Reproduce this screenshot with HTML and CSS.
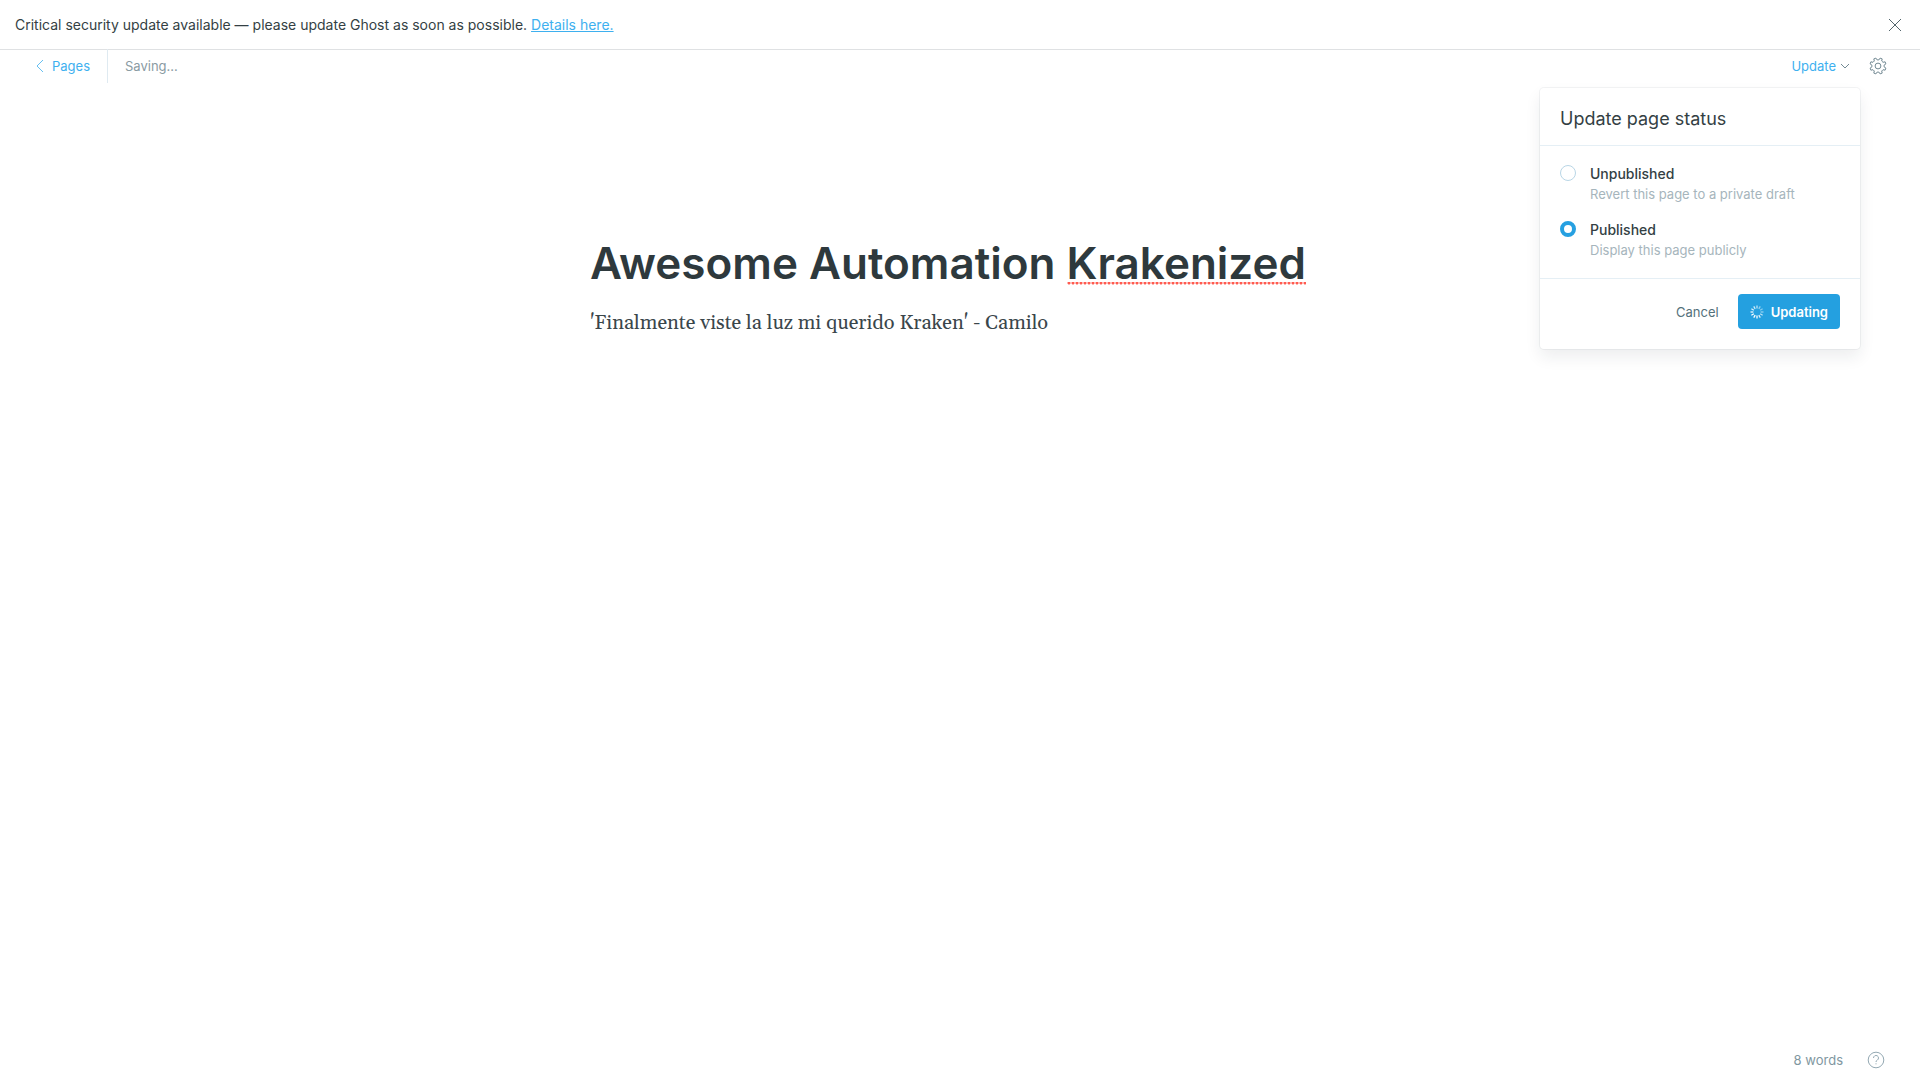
FILE: index.html
```html
<!DOCTYPE html>
<html lang="en">
<head>
<meta charset="utf-8">
<meta name="viewport" content="width=device-width, initial-scale=1">
<title>Editor - Ghost</title>
<link rel="stylesheet" href="styles.css">
</head>
<body>
<div class="app">
  <aside class="alert">
    <p class="alert-text">Critical security update available — please update Ghost as soon as possible. <a href="#details">Details here.</a></p>
    <button class="alert-close" type="button" aria-label="Close">
      <svg width="14" height="14" viewBox="0 0 14 14"><path d="M1 1l12 12M13 1L1 13"/></svg>
    </button>
  </aside>

  <header class="toolbar">
    <a class="back-link" href="#pages">
      <svg width="8" height="14" viewBox="0 0 8 14"><path d="M7 1L1 7l6 6" stroke-width=".8"/></svg>
      Pages
    </a>
    <span class="save-status">Saving...</span>
    <div class="actions">
      <div class="publish-menu">
        <button class="publish-trigger" type="button" aria-expanded="true">
          Update
          <svg width="10" height="6" viewBox="0 0 10 6"><path d="M1 1l4 4 4-4"/></svg>
        </button>
        <form class="dropdown">
          <h2 class="dropdown-title">Update page status</h2>
          <div class="options">
            <label class="option">
              <input type="radio" name="status" value="draft">
              <span class="option-text"><span class="option-name">Unpublished</span><span class="option-note">Revert this page to a private draft</span></span>
            </label>
            <label class="option">
              <input type="radio" name="status" value="published" checked>
              <span class="option-text"><span class="option-name">Published</span><span class="option-note">Display this page publicly</span></span>
            </label>
          </div>
          <div class="dropdown-footer">
            <button class="cancel" type="button">Cancel</button>
            <button class="submit" type="submit">
              <svg width="14" height="14" viewBox="-7 -7 14 14">
                <g stroke="#fff" stroke-width="1.3">
                  <path d="M0 -6.5V-3.6" opacity=".7"/>
                  <path d="M0 -6.5V-3.6" transform="rotate(30)" opacity=".5"/>
                  <path d="M0 -6.5V-3.6" transform="rotate(60)" opacity=".45"/>
                  <path d="M0 -6.5V-3.6" transform="rotate(90)" opacity=".5"/>
                  <path d="M0 -6.5V-3.6" transform="rotate(120)" opacity=".7"/>
                  <path d="M0 -6.5V-3.6" transform="rotate(150)" opacity=".85"/>
                  <path d="M0 -6.5V-3.6" transform="rotate(180)"/>
                  <path d="M0 -6.5V-3.6" transform="rotate(210)"/>
                  <path d="M0 -6.5V-3.6" transform="rotate(240)"/>
                  <path d="M0 -6.5V-3.6" transform="rotate(270)" opacity=".9"/>
                  <path d="M0 -6.5V-3.6" transform="rotate(300)" opacity=".85"/>
                  <path d="M0 -6.5V-3.6" transform="rotate(330)" opacity=".8"/>
                </g>
              </svg>
              Updating
            </button>
          </div>
        </form>
      </div>
      <button class="settings" type="button" aria-label="Settings">
        <svg width="18" height="18" viewBox="-9 -9 18 18"><circle r="2.9"/><path stroke-linejoin="round" d="M6.100 .9L7.900 2.100 7.100 4.200 5 3.700 3.700 5 4.200 7.100 2.100 7.900 .9 6.100H-.9L-2.100 7.900-4.200 7.100-3.700 5-5 3.700-7.100 4.200-7.900 2.100-6.100 .9V-.9L-7.900-2.100-7.100-4.200-5-3.700-3.700-5-4.200-7.100-2.100-7.900-.9-6.100H.9L2.100-7.900 4.200-7.100 3.700-5 5-3.700 7.100-4.200 7.900-2.100 6.100-.9z"/></svg>
      </button>
    </div>
  </header>

  <main class="editor">
    <h1 class="post-title">Awesome Automation <span class="misspelled">Krakenized</span></h1>
    <p class="post-body">'Finalmente viste la luz mi querido Kraken' - Camilo</p>
  </main>

  <footer class="status-bar">
    <span>8 words</span>
    <a class="help" href="#help" aria-label="Help">
      <svg width="18" height="18" viewBox="0 0 18 18"><circle cx="9" cy="9" r="7.800"/><path d="M6.500 7a2.500 2.500 0 1 1 3.800 2.100C9.400 9.600 9 10 9 11M9 12.300v1"/></svg>
    </a>
  </footer>
</div>
</body>
</html>
```
FILE: styles.css
```css
* { box-sizing: border-box; }

body {
  margin: 0;
  background: #fff;
  color: #343f44;
  font: 13px/20px Inter, "Liberation Sans", sans-serif;
}

h1, h2, p { margin: 0; }

button {
  border: 0;
  padding: 0;
  background: none;
  font: inherit;
  cursor: pointer;
}

a { color: #3eb0ef; }

svg {
  display: block;
  fill: none;
  stroke: currentColor;
}

.app {
  display: flex;
  flex-direction: column;
  min-height: 100vh;
}

.alert {
  display: flex;
  align-items: center;
  justify-content: space-between;
  height: 50px;
  padding: 0 18px 0 15px;
  border-bottom: 1px solid #dfe1e3;
}

.alert-text { font-size: 14px; }

.alert-close { color: #54666d; }

.toolbar {
  display: flex;
  align-items: center;
  height: 34px;
  padding: 0 33px 2px 0;
}

.back-link {
  display: flex;
  align-items: center;
  gap: 8px;
  height: 34px;
  padding: 0 17px 0 36px;
  border-right: 1px solid #dfeaf1;
  text-decoration: none;
}

.save-status {
  padding-left: 17px;
  color: #8a9ba3;
}

.actions {
  display: flex;
  align-items: center;
  gap: 19px;
  margin-left: auto;
}

.settings { color: #738a94; }

.publish-menu { position: relative; }

.publish-trigger {
  display: flex;
  align-items: center;
  gap: 4px;
  color: #3eb0ef;
}

.publish-trigger svg { color: #738a94; }

.dropdown {
  position: absolute;
  top: 32px;
  right: -10px;
  width: 320px;
  border-radius: 4px;
  background: #fff;
  box-shadow: 0 0 0 1px rgba(99, 114, 130, 0.08), 0 8px 16px rgba(27, 39, 51, 0.08);
}

.dropdown-title {
  padding: 19px 20px 14px;
  border-bottom: 1px solid #e5eff5;
  font-size: 18px;
  font-weight: 400;
  line-height: 24px;
}

.options {
  display: grid;
  gap: 16px;
  padding: 18px 20px;
}

.option {
  display: flex;
  gap: 14px;
}

.option input {
  flex: none;
  appearance: none;
  width: 16px;
  height: 16px;
  margin: 1px 0 0;
  border: 1px solid #b9d6e6;
  border-radius: 50%;
  background: #fff;
}

.option input:checked { border: 4px solid #26a0e1; }

.option-text { display: grid; }

.option-name {
  font-size: 14px;
  font-weight: 500;
}

.option-note { color: #a6b5bc; }

.dropdown-footer {
  display: flex;
  align-items: center;
  justify-content: flex-end;
  gap: 19px;
  padding: 15px 20px 20px;
  border-top: 1px solid #e5eff5;
}

.cancel { color: #54717b; }

.submit {
  display: flex;
  align-items: center;
  gap: 7px;
  height: 35px;
  padding: 0 12px;
  border-radius: 4px;
  background: #24a0e0;
  color: #fff;
  font-weight: 600;
}

.editor {
  flex: 1;
  width: 100%;
  max-width: 740px;
  margin: 0 auto;
  padding-top: 149px;
}

.post-title {
  color: #2e393d;
  font-size: 44px;
  font-weight: 600;
  line-height: 60px;
}

.misspelled {
  background: radial-gradient(circle at 2px 1px, #ff5b50 1px, transparent 2px) 0 calc(100% - 5px) / 4px 3px repeat-x;
}

.post-body {
  margin-top: 14px;
  color: #3a464b;
  font: 20px/32px Georgia, Gelasio, "Liberation Serif", serif;
}

.status-bar {
  display: flex;
  align-items: center;
  justify-content: flex-end;
  gap: 24px;
  padding: 10px 35px;
  color: #8197a1;
}

.help { color: #94a9b3; }
```
